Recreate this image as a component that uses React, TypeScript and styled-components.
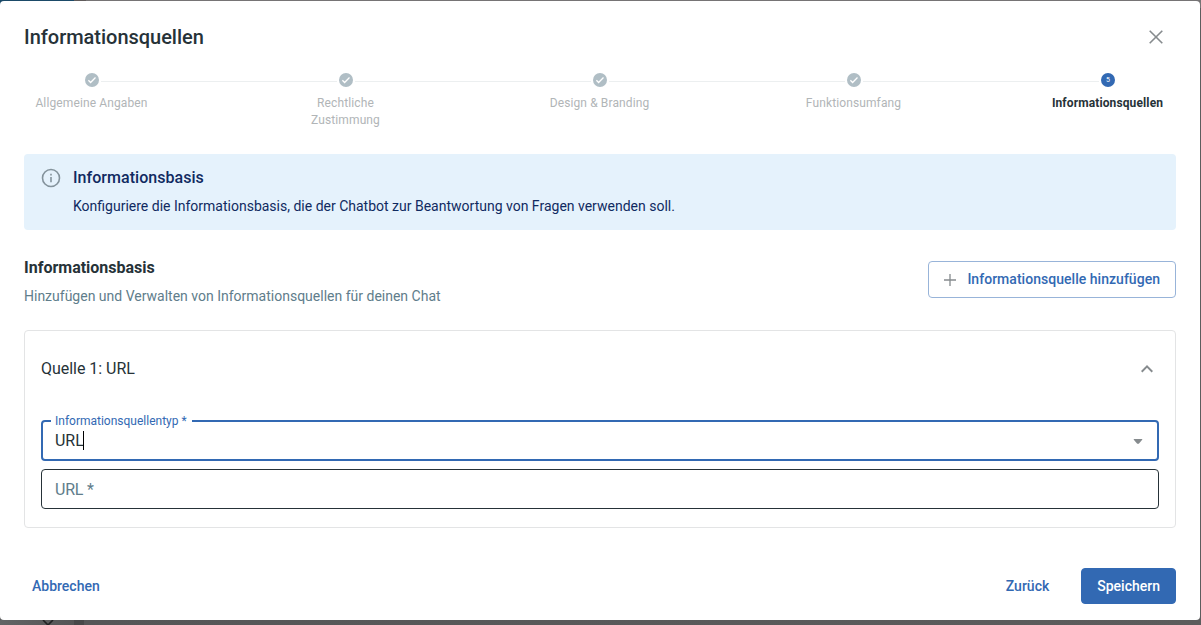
import { Fragment, useState } from "react";
import styled, { createGlobalStyle, ThemeProvider } from "styled-components";

const theme = {
  brand: "#3269b3",
  text: "#263238",
  muted: "#607d8b",
  icon: "#868b8e",
  border: "#e3e4e5",
};

const GlobalStyle = createGlobalStyle`
  *, *::before, *::after {
    box-sizing: border-box;
  }

  body {
    margin: 0;
    overflow: hidden;
    font-family: Roboto, "Liberation Sans", sans-serif;
    color: ${theme.text};
    -webkit-font-smoothing: antialiased;
  }

  button, input {
    font-family: inherit;
  }

  h2, h3, p {
    margin: 0;
  }
`;

const Backdrop = styled.div`
  display: flex;
  flex-direction: column;
  height: 625px;
  padding: 1px 1px 0 0;
  background: linear-gradient(90deg, #1b4a68 74px, #5f5b5b 74px, #5f5b5b 86px, #767475 86px) top / 100% 8px no-repeat,
    #5c5d5e;
`;

const PageStrip = styled.div`
  display: flex;
  height: 5px;
  padding-left: 42px;
  overflow: hidden;
  background: linear-gradient(90deg, #626465 0, #545556 74px, #474849 74px, #474849 84px, #555657 84px, #5c5c5c);

  svg {
    display: block;
  }
`;

const Dialog = styled.div`
  display: flex;
  flex-direction: column;
  height: 619px;
  padding: 0 24px 16px;
  border-radius: 4px;
  background: #fff;
`;

const DialogHeader = styled.header`
  display: flex;
  align-items: center;
  justify-content: space-between;
  height: 72px;
`;

const DialogTitle = styled.h2`
  font-size: 20px;
  font-weight: 500;
  line-height: 32px;
  letter-spacing: -0.02px;
`;

const IconButton = styled.button<{ $edge?: boolean }>`
  display: flex;
  padding: 8px;
  margin-right: ${({ $edge }) => ($edge ? "-8px" : "0")};
  border: 0;
  background: none;
  color: ${(props) => props.theme.icon};
  cursor: pointer;
`;

const Stepper = styled.div`
  display: flex;
  height: 81px;
`;

const Step = styled.div`
  display: flex;
  flex-direction: column;
  align-items: center;
  width: 136px;
  padding: 0 8px;
`;

const StepIcon = styled.div<{ $active?: boolean }>`
  display: flex;
  align-items: center;
  justify-content: center;
  width: 14px;
  height: 14px;
  border-radius: 50%;
  background: ${({ $active, theme }) => ($active ? theme.brand : "#b0bec5")};
  color: #fff;
  font-size: 7px;
`;

const StepLabel = styled.span<{ $active?: boolean }>`
  margin: 8px 1px 0 0;
  font-size: 12px;
  font-weight: ${({ $active }) => ($active ? 700 : 400)};
  line-height: 17px;
  letter-spacing: 0.12px;
  text-align: center;
  color: ${({ $active, theme }) => ($active ? theme.text : "#b1b5b7")};
`;

const Connector = styled.div`
  flex: 1;
  height: 1px;
  margin: 8px -59px 0;
  background: #eceff0;
`;

const Alert = styled.div`
  display: flex;
  gap: 12px;
  height: 76px;
  padding: 10px 17px;
  border-radius: 4px;
  background: #e5f2fc;
  color: #102a61;
`;

const AlertIcon = styled.div`
  height: 22px;
  margin-top: 4px;
  color: #84939c;
`;

const AlertTitle = styled.h3`
  font-size: 16px;
  font-weight: 500;
  line-height: 28px;
  letter-spacing: 0.04px;
`;

const AlertText = styled.p`
  margin-top: 4px;
  font-size: 14px;
  line-height: 20px;
`;

const SectionHeader = styled.div`
  display: flex;
  align-items: flex-start;
  justify-content: space-between;
  margin-top: 24px;
  height: 52px;
`;

const SectionTitle = styled.h3`
  font-size: 16px;
  font-weight: 700;
  line-height: 28px;
`;

const SectionText = styled.p`
  margin-top: 4px;
  font-size: 14px;
  line-height: 20px;
  color: ${(props) => props.theme.muted};
`;

const Button = styled.button<{ $variant?: "text" | "outlined" | "contained" }>`
  display: flex;
  align-items: center;
  height: ${({ $variant }) => ($variant === "outlined" ? "37px" : "36px")};
  margin-top: ${({ $variant }) => ($variant === "outlined" ? "7px" : "0")};
  padding: ${({ $variant }) => ($variant === "text" ? "0 7px" : $variant === "outlined" ? "0 15px 1px" : "0 15px")};
  border: 1px solid
    ${({ $variant, theme }) =>
      $variant === "outlined" ? "#98b4d9" : $variant === "contained" ? theme.brand : "transparent"};
  border-radius: 4px;
  background: ${({ $variant, theme }) => ($variant === "contained" ? theme.brand : "transparent")};
  color: ${({ $variant, theme }) => ($variant === "contained" ? "#fff" : theme.brand)};
  font-size: 14px;
  font-weight: 500;
  letter-spacing: ${({ $variant }) => ($variant === "outlined" ? "0.03px" : "normal")};
  white-space: nowrap;
  cursor: pointer;

  svg {
    margin: 1px 11px 0 0;
    color: ${(props) => props.theme.icon};
  }
`;

const SourceCard = styled.section`
  height: 198px;
  margin-top: 24px;
  padding: 0 16px;
  border: 1px solid ${(props) => props.theme.border};
  border-radius: 4px;
`;

const SourceHeader = styled.div`
  display: flex;
  align-items: center;
  justify-content: space-between;
  height: 75px;
  font-size: 16px;
  letter-spacing: -0.03px;
`;

const Fields = styled.div`
  display: flex;
  flex-direction: column;
  gap: 8px;
  padding-top: 14px;
`;

const Field = styled.div<{ $focused?: boolean }>`
  position: relative;
  display: flex;
  align-items: center;
  height: ${({ $focused }) => ($focused ? "41px" : "40px")};
  padding: 0 ${({ $focused }) => ($focused ? "12px" : "13px")};
  border: ${({ $focused, theme }) => ($focused ? `2px solid ${theme.brand}` : `1px solid ${theme.text}`)};
  border-radius: 4px;
  color: ${(props) => props.theme.text};
`;

const FloatingLabel = styled.label`
  position: absolute;
  top: -9px;
  left: 8px;
  padding: 0 5px 0 4px;
  background: #fff;
  color: ${(props) => props.theme.brand};
  font-size: 12px;
  line-height: 16px;
`;

const FieldValue = styled.span`
  font-size: 16px;
  line-height: 23px;
  letter-spacing: -0.03px;
`;

const Caret = styled.span`
  width: 1px;
  height: 19px;
  margin-left: -1px;
  background: #000;
`;

const Placeholder = styled(FieldValue)`
  letter-spacing: -0.2px;
  color: ${(props) => props.theme.muted};
`;

const DropdownArrow = styled.svg`
  margin: 1px 2px 0 auto;
  color: ${(props) => props.theme.icon};
`;

const DialogActions = styled.footer`
  display: flex;
  align-items: center;
  gap: 24px;
  margin-top: auto;
`;

const Spacer = styled.div`
  flex: 1;
`;

const steps = [
  "Allgemeine Angaben",
  "Rechtliche Zustimmung",
  "Design & Branding",
  "Funktionsumfang",
  "Informationsquellen",
];

const activeStep = 4;

export default function App() {
  const [isExpanded, setIsExpanded] = useState<boolean>(true);

  return (
    <ThemeProvider theme={theme}>
      <GlobalStyle />
      <Backdrop>
        <Dialog role="dialog">
          <DialogHeader>
            <DialogTitle>Informationsquellen</DialogTitle>
            <IconButton aria-label="Schließen">
              <svg width="24" height="24" viewBox="0 0 24 24" fill="none" stroke="currentColor" strokeWidth="1.6">
                <path d="M5.7 5.7l12.6 12.6M18.3 5.7L5.7 18.3" />
              </svg>
            </IconButton>
          </DialogHeader>

          <Stepper>
            {steps.map((label, index) => (
              <Fragment key={label}>
                {index > 0 && <Connector />}
                <Step>
                  <StepIcon $active={index === activeStep}>
                    {index === activeStep ? (
                      index + 1
                    ) : (
                      <svg width="14" height="14" viewBox="0 0 14 14" fill="none" stroke="#fff" strokeWidth="1.3">
                        <path d="M3.4 7.3l2.2 2.2 4.9-5" />
                      </svg>
                    )}
                  </StepIcon>
                  <StepLabel $active={index === activeStep}>{label}</StepLabel>
                </Step>
              </Fragment>
            ))}
          </Stepper>

          <Alert>
            <AlertIcon>
              <svg width="20" height="20" viewBox="0 0 20 20" fill="none" stroke="currentColor" strokeWidth="1.6">
                <circle cx="10" cy="10" r="8.5" />
                <path d="M10 9v5.2M10 5.8v1.7" />
              </svg>
            </AlertIcon>
            <div>
              <AlertTitle>Informationsbasis</AlertTitle>
              <AlertText>
                Konfiguriere die Informationsbasis, die der Chatbot zur Beantwortung von Fragen verwenden soll.
              </AlertText>
            </div>
          </Alert>

          <SectionHeader>
            <div>
              <SectionTitle>Informationsbasis</SectionTitle>
              <SectionText>Hinzufügen und Verwalten von Informationsquellen für deinen Chat</SectionText>
            </div>
            <Button $variant="outlined">
              <svg width="12" height="12" viewBox="0 0 12 12" fill="none" stroke="currentColor" strokeWidth="1.3">
                <path d="M6 0v12M0 6h12" />
              </svg>
              Informationsquelle hinzufügen
            </Button>
          </SectionHeader>

          <SourceCard>
            <SourceHeader>
              Quelle 1: URL
              <IconButton
                $edge
                aria-label="Quelle ein- oder ausklappen"
                onClick={() => setIsExpanded(!isExpanded)}
              >
                <svg width="24" height="24" viewBox="0 0 24 24" fill="currentColor">
                  <path d="M12 8l-6 6 1.41 1.41L12 10.83l4.59 4.58L18 14z" />
                </svg>
              </IconButton>
            </SourceHeader>
            {isExpanded && (
              <Fields>
                <Field $focused>
                  <FloatingLabel>Informationsquellentyp *</FloatingLabel>
                  <FieldValue>URL</FieldValue>
                  <Caret />
                  <DropdownArrow width="10" height="5" viewBox="0 0 10 5" fill="currentColor">
                    <path d="M0.8 0h8.4v0.8L5.8 4.8H4.2L0.8 0.8z" />
                  </DropdownArrow>
                </Field>
                <Field>
                  <Placeholder>URL *</Placeholder>
                </Field>
              </Fields>
            )}
          </SourceCard>

          <DialogActions>
            <Button $variant="text">Abbrechen</Button>
            <Spacer />
            <Button $variant="text">Zurück</Button>
            <Button $variant="contained">Speichern</Button>
          </DialogActions>
        </Dialog>
        <PageStrip>
          <svg width="12" height="5" viewBox="0 0 12 5" fill="none" stroke="#202223" strokeWidth="1.6">
            <path d="M1 0l5 5 5-5" />
          </svg>
        </PageStrip>
      </Backdrop>
    </ThemeProvider>
  );
}
